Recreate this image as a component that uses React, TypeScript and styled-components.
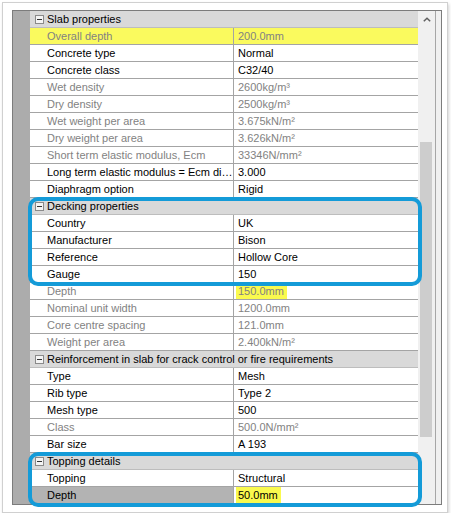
import React from 'react';
import styled, { createGlobalStyle } from 'styled-components';

type Prop = {
  name: string;
  value: string;
  readOnly?: boolean;
  mark?: 'row' | 'value';
  selected?: boolean;
};

type Section = {
  title: string;
  callout?: number; // number of rows under the header that get the blue outline
  props: Prop[];
};

const sections: Section[] = [
  {
    title: 'Slab properties',
    props: [
      { name: 'Overall depth', value: '200.0mm', readOnly: true, mark: 'row' },
      { name: 'Concrete type', value: 'Normal' },
      { name: 'Concrete class', value: 'C32/40' },
      { name: 'Wet density', value: '2600kg/m³', readOnly: true },
      { name: 'Dry density', value: '2500kg/m³', readOnly: true },
      { name: 'Wet weight per area', value: '3.675kN/m²', readOnly: true },
      { name: 'Dry weight per area', value: '3.626kN/m²', readOnly: true },
      { name: 'Short term elastic modulus, Ecm', value: '33346N/mm²', readOnly: true },
      { name: 'Long term elastic modulus = Ecm di…', value: '3.000' },
      { name: 'Diaphragm option', value: 'Rigid' },
    ],
  },
  {
    title: 'Decking properties',
    callout: 4,
    props: [
      { name: 'Country', value: 'UK' },
      { name: 'Manufacturer', value: 'Bison' },
      { name: 'Reference', value: 'Hollow Core' },
      { name: 'Gauge', value: '150' },
      { name: 'Depth', value: '150.0mm', readOnly: true, mark: 'value' },
      { name: 'Nominal unit width', value: '1200.0mm', readOnly: true },
      { name: 'Core centre spacing', value: '121.0mm', readOnly: true },
      { name: 'Weight per area', value: '2.400kN/m²', readOnly: true },
    ],
  },
  {
    title: 'Reinforcement in slab for crack control or fire requirements',
    props: [
      { name: 'Type', value: 'Mesh' },
      { name: 'Rib type', value: 'Type 2' },
      { name: 'Mesh type', value: '500' },
      { name: 'Class', value: '500.0N/mm²', readOnly: true },
      { name: 'Bar size', value: 'A 193' },
    ],
  },
  {
    title: 'Topping details',
    callout: 2,
    props: [
      { name: 'Topping', value: 'Structural' },
      { name: 'Depth', value: '50.0mm', mark: 'value', selected: true },
    ],
  },
];

const GlobalStyle = createGlobalStyle`
  html, body {
    margin: 0;
    padding: 0;
    background: #ffffff;
  }
  body {
    font-family: "Liberation Sans", Arial, sans-serif;
    font-size: 11px;
    color: #000;
  }
`;

const Frame = styled.div`
  box-sizing: border-box;
  margin: 2px 0 0 2px;
  width: 446px;
  height: 511px;
  padding: 7px 5px 0 9px;
  border: 1px solid #d0d0d0;
  background: #fff;
  box-shadow: 1px 2px 3px rgba(0, 0, 0, 0.18);
`;

const Panel = styled.div`
  display: flex;
  border: 1px solid #7c7c7c;
  background: #fff;
`;

const Gutter = styled.div`
  flex: none;
  width: 17px;
  background: #acacac;
`;

const Grid = styled.div`
  flex: none;
  width: 388px;
`;

const ScrollBar = styled.div`
  flex: none;
  width: 17px;
  display: flex;
  flex-direction: column;
  background: #f0f0f0;
  border-right: 1px solid #a6a6a6;
`;

const ScrollArrow = styled.div`
  height: 17px;
  display: flex;
  align-items: center;
  justify-content: center;
`;

const ScrollThumb = styled.div`
  margin: 114px 3px 0 2px;
  height: 295px;
  background: #cdcdcd;
`;

const ScrollEdge = styled.div`
  flex: none;
  width: 5px;
  background: #f0f0f0;
`;

const Callout = styled.div`
  position: relative;

  &::after {
    content: '';
    position: absolute;
    top: -1px;
    left: -2px;
    right: -4px;
    bottom: -3px;
    border: 4px solid #149bd8;
    border-radius: 10px;
    pointer-events: none;
    z-index: 2;
  }
`;

const HeaderRow = styled.div`
  display: flex;
  align-items: center;
  gap: 3px;
  height: 16px;
  padding-left: 5px;
  background: #d9d9d9;
  border-bottom: 1px solid #bdbdbd;
  white-space: nowrap;
  line-height: 16px;
`;

const Toggle = styled.span`
  box-sizing: border-box;
  width: 9px;
  height: 9px;
  border: 1px solid #8a8a8a;
  background: #f4f4f4;
  display: flex;
  align-items: center;
  justify-content: center;

  &::before {
    content: '';
    width: 5px;
    height: 1px;
    background: #333;
  }
`;

const Row = styled.div<{ $marked?: boolean }>`
  display: grid;
  grid-template-columns: 204px 184px;
  height: 16px;
  line-height: 16px;
  background: ${({ $marked }) => ($marked ? '#fafa5e' : '#fff')};
  border-bottom: 1px solid #a4a4a4;
`;

const NameCell = styled.div<{ $dim?: boolean; $selected?: boolean }>`
  padding-left: 17px;
  border-right: 1px solid #a4a4a4;
  color: ${({ $dim }) => ($dim ? '#828282' : '#000')};
  background: ${({ $selected }) => ($selected ? '#b3b3b3' : 'transparent')};
  white-space: nowrap;
  overflow: hidden;
  text-overflow: ellipsis;
`;

const ValueCell = styled.div<{ $dim?: boolean }>`
  padding-left: 4px;
  color: ${({ $dim }) => ($dim ? '#828282' : '#000')};
  white-space: nowrap;
  overflow: hidden;
`;

const Marker = styled.span`
  display: inline-block;
  height: 16px;
  margin-left: -2px;
  padding: 0 3px 0 2px;
  background: #fafa4e;
`;

const PropRow: React.FC<{ prop: Prop }> = ({ prop }) => (
  <Row $marked={prop.mark === 'row'}>
    <NameCell $dim={prop.readOnly} $selected={prop.selected}>
      {prop.name}
    </NameCell>
    <ValueCell $dim={prop.readOnly}>
      {prop.mark === 'value' ? <Marker>{prop.value}</Marker> : prop.value}
    </ValueCell>
  </Row>
);

const SectionHeader: React.FC<{ title: string }> = ({ title }) => (
  <HeaderRow>
    <Toggle />
    {title}
  </HeaderRow>
);

const SectionBlock: React.FC<{ section: Section }> = ({ section }) => {
  const n = section.callout ?? 0;
  const head = (
    <>
      <SectionHeader title={section.title} />
      {section.props.slice(0, n).map((p, i) => (
        <PropRow key={i} prop={p} />
      ))}
    </>
  );

  return (
    <>
      {n > 0 ? <Callout>{head}</Callout> : head}
      {section.props.slice(n).map((p, i) => (
        <PropRow key={i + n} prop={p} />
      ))}
    </>
  );
};

const App: React.FC = () => (
  <>
    <GlobalStyle />
    <Frame>
      <Panel>
        <Gutter />
        <Grid>
          {sections.map((s) => (
            <SectionBlock key={s.title} section={s} />
          ))}
        </Grid>
        <ScrollBar>
          <ScrollArrow>
            <svg width="8" height="5" viewBox="0 0 8 5">
              <polyline points="0.8,4.3 4,1.2 7.2,4.3" fill="none" stroke="#606060" strokeWidth="1.5" />
            </svg>
          </ScrollArrow>
          <ScrollThumb />
        </ScrollBar>
        <ScrollEdge />
      </Panel>
    </Frame>
  </>
);

export default App;
